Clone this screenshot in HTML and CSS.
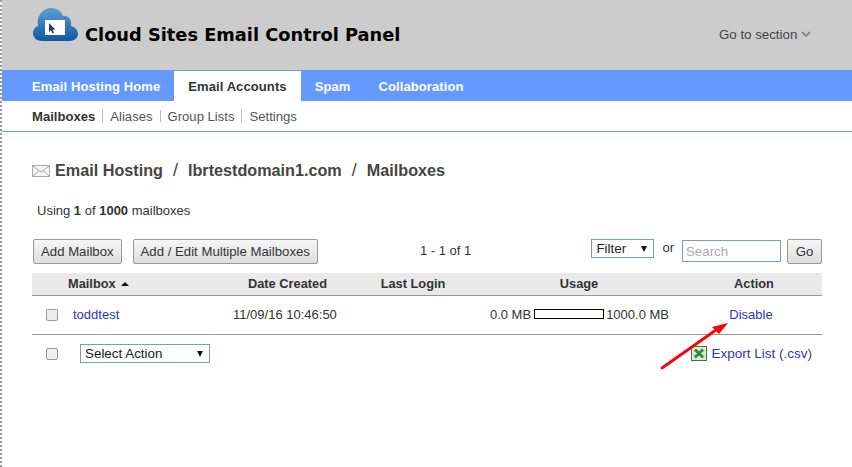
FILE: index.html
```html
<!DOCTYPE html>
<html lang="en">
<head>
    <meta charset="UTF-8">
    <meta name="viewport" content="width=device-width, initial-scale=1.0">
    <title>Cloud Sites Email Control Panel</title>
    <link rel="stylesheet" href="styles.css">
</head>
<body>
    <div class="page">
        <header class="header">
            <div class="brand">
                <svg class="logo" width="46" height="36" viewBox="0 0 46 36">
                    <defs>
                        <linearGradient id="cloudFill" x1="0" y1="0" x2="0" y2="1">
                            <stop offset="0" stop-color="#5f9fd8"/>
                            <stop offset="1" stop-color="#0f56a4"/>
                        </linearGradient>
                    </defs>
                    <path d="M9 34C4 34 0 31 0 26.500C0 22.500 2 20 5 19C3 9 10 1 18 1C24 1 28 4 30 9C35 8 39 13 38 19C42 20 45 23 45 27C45 31 41 34 37 34Z" fill="url(#cloudFill)"/>
                    <rect x="12" y="13" width="20" height="15" fill="#fff"/>
                    <path d="M16 16V25L18 23.200L19.500 26.500L21 25.800L19.600 22.700L22.300 22.500Z" fill="#17407a"/>
                </svg>
                <h1 class="brand-title">Cloud Sites Email Control Panel</h1>
            </div>
            <a class="section-link" href="#">Go to section
                <svg width="10" height="6" viewBox="0 0 10 6"><path d="M1 1L5 5L9 1" fill="none" stroke="#888" stroke-width="1.800"/></svg>
            </a>
        </header>

        <nav class="main-nav">
            <a href="#">Email Hosting Home</a>
            <a href="#" class="active">Email Accounts</a>
            <a href="#">Spam</a>
            <a href="#">Collaboration</a>
        </nav>

        <nav class="sub-nav">
            <a href="#" class="current">Mailboxes</a>
            <span class="sep"></span>
            <a href="#">Aliases</a>
            <span class="sep"></span>
            <a href="#">Group Lists</a>
            <span class="sep"></span>
            <a href="#">Settings</a>
        </nav>

        <main class="content">
            <h2 class="crumbs">
                <svg width="18" height="12" viewBox="0 0 18 12">
                    <rect x="0.500" y="0.500" width="17" height="11" fill="#f4f4f4" stroke="#aaa"/>
                    <path d="M1 1L9 7L17 1M1 11L7 5.500M17 11L11 5.500" fill="none" stroke="#aaa"/>
                </svg>
                <span>Email Hosting</span>
                <span class="slash">/</span>
                <span>lbrtestdomain1.com</span>
                <span class="slash">/</span>
                <span>Mailboxes</span>
            </h2>

            <p class="usage-note">Using <b>1</b> of <b>1000</b> mailboxes</p>

            <div class="toolbar">
                <div class="toolbar-left">
                    <button class="btn">Add Mailbox</button>
                    <button class="btn">Add / Edit Multiple Mailboxes</button>
                </div>
                <div class="pager">1 - 1 of 1</div>
                <div class="toolbar-right">
                    <div class="fake-select filter-select">Filter<span class="caret"></span></div>
                    <span class="or">or</span>
                    <input class="search" type="text" placeholder="Search">
                    <button class="btn go">Go</button>
                </div>
            </div>

            <div class="grid-row grid-head">
                <div></div>
                <div class="col-mailbox">Mailbox <span class="sort"></span></div>
                <div class="col-date">Date Created</div>
                <div class="col-login">Last Login</div>
                <div class="col-usage">Usage</div>
                <div class="col-action">Action</div>
            </div>
            <div class="grid-row grid-body">
                <div class="col-check"><span class="check"></span></div>
                <div class="col-name"><a href="#">toddtest</a></div>
                <div class="col-date">11/09/16 10:46:50</div>
                <div></div>
                <div class="usage-cell">0.0 MB <span class="bar"></span> 1000.0 MB</div>
                <div class="col-action"><a href="#">Disable</a></div>
            </div>

            <div class="footer-row">
                <div class="footer-left">
                    <span class="check"></span>
                    <div class="fake-select action-select">Select Action<span class="caret"></span></div>
                </div>
                <a class="export" href="#">
                    <svg width="16" height="15" viewBox="0 0 16 15">
                        <rect x="0.500" y="0.500" width="15" height="14" fill="#dcebd6" stroke="#3d7a3a"/>
                        <path d="M2 5H14M2 9H14" stroke="#a9cda3"/>
                        <path d="M4 3.500L12 11.500M12 3.500L4 11.500" stroke="#2f8a35" stroke-width="2.600"/>
                    </svg>
                    Export List (.csv)
                </a>
            </div>
        </main>

        <svg class="arrow" width="70" height="50" viewBox="0 0 70 50">
            <path d="M2 47L56 9" stroke="#f00" stroke-width="2.800" stroke-linecap="round"/>
            <path d="M68 2L52 6L59 13Z" fill="#f00"/>
        </svg>
    </div>
</body>
</html>
```

FILE: styles.css
```css
* {
    box-sizing: border-box;
}
html, body {
    margin: 0;
    height: 100%;
}
body {
    font-family: "Liberation Sans", Arial, sans-serif;
    font-size: 13px;
    color: #333;
    background: #fff;
    overflow: hidden;
}
a {
    text-decoration: none;
}
.page {
    position: relative;
    min-height: 467px;
    margin-left: 2px;
}
.page::before {
    content: "";
    position: absolute;
    left: -2px;
    top: 0;
    bottom: 0;
    border-left: 2px dotted #999;
}
.header {
    height: 70px;
    background: #ccc;
    display: flex;
    justify-content: space-between;
    padding: 7px 41px 0 31px;
}
.brand {
    display: flex;
    align-items: flex-start;
}
.logo {
    display: block;
}
.brand-title {
    margin: 17px 0 0 6px;
    font-family: "DejaVu Sans", Verdana, sans-serif;
    font-size: 17.800px;
    line-height: 22px;
    color: #000;
}
.section-link {
    margin-top: 20px;
    color: #444;
    font-size: 13.300px;
    line-height: 15px;
}
.section-link svg {
    vertical-align: 2px;
}
.main-nav {
    height: 31px;
    background: #6699ff;
    display: flex;
    padding: 1px 0 0 16px;
}
.main-nav a {
    padding: 0 14px;
    color: #fff;
    font-weight: bold;
    font-size: 13px;
    letter-spacing: 0.100px;
    line-height: 31px;
}
.main-nav a.active {
    background: #fff;
    color: #333;
}
.sub-nav {
    height: 31px;
    border-bottom: 1px solid #6699ff;
    display: flex;
    align-items: center;
    padding: 0 0 0 30px;
    font-size: 13.100px;
}
.sub-nav a {
    color: #555;
}
.sub-nav a.current {
    color: #333;
    font-weight: bold;
}
.sep {
    width: 1px;
    height: 12px;
    background: #bbb;
    margin: 0 7px;
}
.content {
    padding: 28px 30px 0 30px;
}
.crumbs {
    margin: 0;
    display: flex;
    align-items: center;
    font-size: 16.200px;
    line-height: 20px;
    color: #444;
}
.crumbs svg {
    margin: 1px 5px 0 0;
}
.slash {
    margin: 0 10px;
    font-weight: normal;
    font-size: 18px;
}
.usage-note {
    margin: 23px 0 0 5px;
    font-size: 13px;
    line-height: 16px;
    color: #333;
}
.toolbar {
    margin-top: 20px;
    display: grid;
    grid-template-columns: 388px auto 1fr;
    align-items: start;
    height: 25px;
}
.toolbar-left {
    display: flex;
    gap: 11px;
    padding-left: 1px;
}
.btn {
    height: 25px;
    padding: 0 7px;
    font-family: inherit;
    font-size: 13.200px;
    color: #333;
    background: linear-gradient(#f6f6f6, #dedede);
    border: 1px solid #999;
    border-radius: 2px;
}
.pager {
    font-size: 13px;
    line-height: 23px;
    color: #333;
}
.toolbar-right {
    display: flex;
    justify-content: flex-end;
    align-items: flex-start;
}
.fake-select {
    position: relative;
    height: 19px;
    border: 1px solid #7a9cc0;
    font-size: 13.400px;
    line-height: 18px;
    color: #222;
    padding-left: 4px;
    background: #fff;
}
.caret {
    position: absolute;
    right: 6px;
    top: 6px;
    border-left: 3px solid transparent;
    border-right: 3px solid transparent;
    border-top: 6px solid #111;
}
.filter-select {
    width: 63px;
}
.or {
    margin: 0 8px;
    font-size: 13px;
    line-height: 18px;
}
.search {
    width: 99px;
    height: 22px;
    margin-top: 1px;
    padding: 0 3px;
    border: 1px solid #7a9cc0;
    font-family: inherit;
    font-size: 13.300px;
}
.search::placeholder {
    color: #aaa;
}
.go {
    margin-left: 6px;
    width: 35px;
    padding: 0;
}
.grid-row {
    display: grid;
    grid-template-columns: 36px 148px 144px 106px 226px 130px;
    align-items: center;
}
.grid-head {
    margin-top: 9px;
    height: 23px;
    padding-bottom: 2px;
    background: #e9e9e9;
    border-bottom: 1px solid #999;
    font-weight: bold;
    font-size: 12.800px;
    color: #333;
    text-align: center;
}
.col-mailbox {
    text-align: left;
}
.sort {
    display: inline-block;
    margin-left: 2px;
    vertical-align: 2px;
    border-left: 4px solid transparent;
    border-right: 4px solid transparent;
    border-bottom: 4px solid #111;
}
.grid-row .col-date {
    text-align: left;
    padding-left: 17px;
}
.grid-head .col-date {
    padding-left: 32px;
}
.col-login {
    text-align: center;
}
.col-action {
    text-align: center;
    padding-right: 6px;
}
.grid-body {
    height: 39px;
    padding-bottom: 2px;
    border-bottom: 1px solid #999;
    font-size: 13px;
    color: #333;
}
.col-check {
    padding: 2px 0 0 14px;
}
.check {
    display: block;
    width: 12px;
    height: 12px;
    border: 1px solid #999;
    border-radius: 2px;
    background: #eee;
}
.col-name {
    padding-left: 5px;
}
.grid-body a, .export {
    color: #2a35c8;
}
.usage-cell {
    display: flex;
    align-items: center;
    justify-content: flex-end;
    gap: 3px;
    white-space: nowrap;
    padding-right: 23px;
}
.usage-cell .bar {
    margin-right: -1px;
}
.grid-body .col-action {
    padding-right: 12px;
}
.bar {
    width: 70px;
    height: 10px;
    border: 1px solid #000;
}
.footer-row {
    display: flex;
    justify-content: space-between;
    align-items: center;
    height: 37px;
}
.footer-left {
    display: flex;
    align-items: center;
    gap: 22px;
    padding-left: 14px;
}
.action-select {
    width: 130px;
}
.export {
    display: flex;
    align-items: center;
    gap: 4px;
    font-size: 13.500px;
    margin-right: 10px;
}
.arrow {
    position: absolute;
    left: 658px;
    top: 321px;
}
```
